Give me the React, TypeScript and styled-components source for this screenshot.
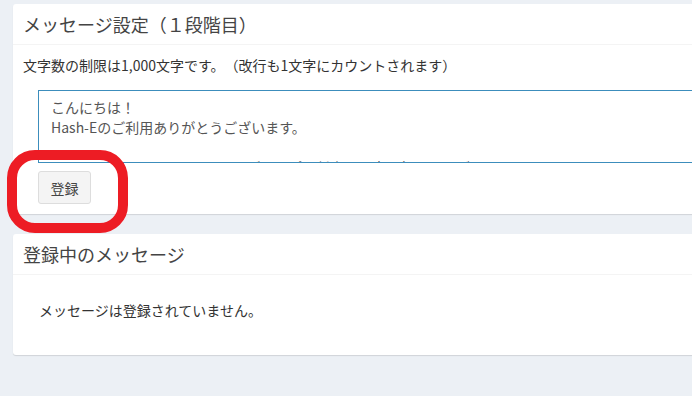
import styled, { createGlobalStyle } from 'styled-components';

const GlobalStyle = createGlobalStyle`
  html, body {
    margin: 0;
    padding: 0;
    background: #ecf0f5;
    overflow: hidden;
  }
  body {
    font-family: "Noto Sans CJK JP", "Noto Sans", sans-serif;
    color: #333;
    font-size: 14px;
    text-spacing-trim: space-all;
  }
`;

const Page = styled.div`
  position: relative;
  width: 900px;
  padding: 4px 0 0 13px;
`;

const Box = styled.div`
  background: #fff;
  border-radius: 3px;
  box-shadow: 0 1px 1px rgba(0, 0, 0, 0.12);
  margin-bottom: 20px;
`;

const BoxHeader = styled.div`
  height: 40px;
  display: flex;
  align-items: center;
  padding: 0 10px;
  border-bottom: 1px solid #f4f4f4;
`;

const BoxTitle = styled.h3`
  margin: 0;
  font-size: 18px;
  font-weight: 400;
  line-height: 1;
  color: #444;
`;

const BoxBody = styled.div`
  padding: 10px;
`;

const Note = styled.p`
  margin: 0 0 15px;
  line-height: 20px;
  font-size: 14px;
`;

const FormGroup = styled.div`
  padding-left: 15px;
`;

const MessageArea = styled.textarea`
  display: block;
  box-sizing: border-box;
  width: 100%;
  height: 73px;
  margin: 0 0 8px;
  padding: 6px 12px 0;
  border: 1px solid #3c8dbc;
  border-radius: 0;
  font-family: "Noto Sans CJK JP", "Noto Sans", sans-serif;
  font-size: 14px;
  line-height: 20px;
  color: #555;
  resize: none;
  overflow: hidden;
  outline: none;
  text-spacing-trim: space-all;
`;

const Button = styled.button`
  width: 53px;
  height: 33px;
  padding: 0;
  background: #f4f4f4;
  border: 1px solid #ddd;
  border-radius: 3px;
  font-family: "Noto Sans CJK JP", "Noto Sans", sans-serif;
  font-size: 14px;
  color: #444;
`;

const EmptyText = styled.p`
  margin: 0 0 10px;
  padding: 15px 16px;
  line-height: 20px;
  font-size: 14px;
`;

const Highlight = styled.div`
  position: absolute;
  left: 7px;
  top: 150px;
  width: 101px;
  height: 63px;
  border: 10px solid #ed1c24;
  border-radius: 28px;
  pointer-events: none;
`;

const message = `こんにちは！
Hash-Eのご利用ありがとうございます。

このアカウントではメッセージグループに任意の設定を行うことができます。`;

export default function App() {
  return (
    <>
      <GlobalStyle />
      <Page>
        <Box>
          <BoxHeader>
            <BoxTitle>メッセージ設定（１段階目）</BoxTitle>
          </BoxHeader>
          <BoxBody>
            <Note>文字数の制限は1,000文字です。（改行も1文字にカウントされます）</Note>
            <FormGroup>
              <MessageArea defaultValue={message} />
              <Button>登録</Button>
            </FormGroup>
          </BoxBody>
        </Box>
        <Box>
          <BoxHeader>
            <BoxTitle>登録中のメッセージ</BoxTitle>
          </BoxHeader>
          <BoxBody>
            <EmptyText>メッセージは登録されていません。</EmptyText>
          </BoxBody>
        </Box>
        <Highlight />
      </Page>
    </>
  );
}
